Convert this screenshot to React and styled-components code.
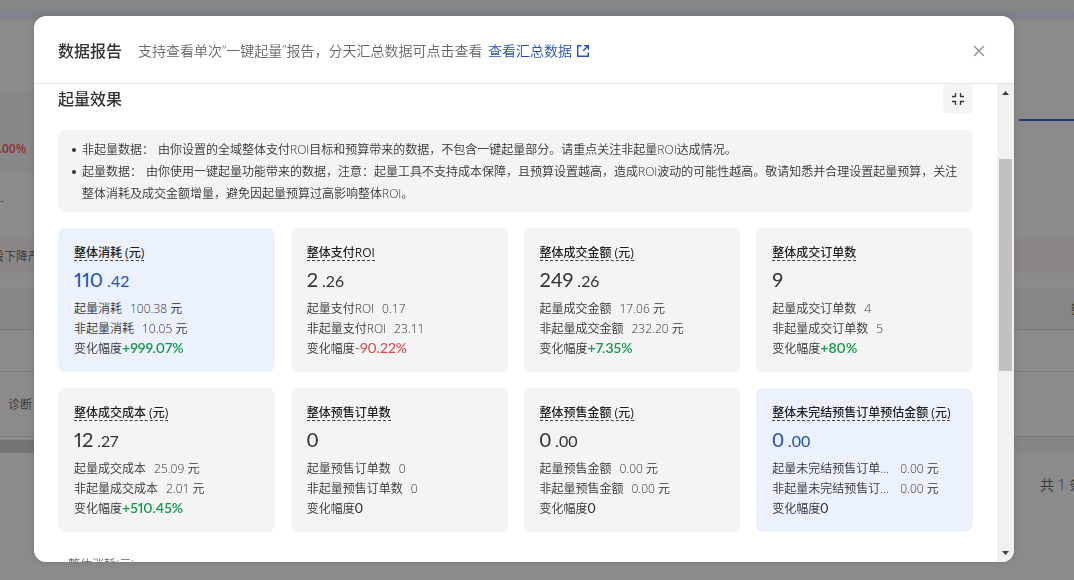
import React, { useState } from "react";
import styled, { createGlobalStyle, css } from "styled-components";

const GlobalStyle = createGlobalStyle`
  * {
    box-sizing: border-box;
  }

  body {
    margin: 0;
    background-color: #8b8b8b;
    font-family: "Open Sans", "Noto Sans CJK SC", sans-serif;
    font-size: 12px;
    color: #333333;
    overflow: hidden;
  }

  button {
    padding: 0;
    border: none;
    background: none;
    font-family: inherit;
    cursor: pointer;
  }
`;

/* 弹窗后面的页面 */
const Page = styled.div`
  display: flex;
  justify-content: space-between;
  min-height: 100vh;
  background: linear-gradient(#868688 0, #868688 8px, #80838b 12px, #80838b 18px, #8b8b8b 22px);
`;

const Side = styled.div`
  display: flex;
  flex-direction: column;
  width: ${(props) => (props.$right ? "60px" : "40px")};
  overflow: hidden;
  white-space: nowrap;
`;

const Band = styled.div`
  display: flex;
  flex-shrink: 0;
  align-items: center;
  justify-content: ${(props) => (props.$start ? "flex-start" : "flex-end")};
  height: ${(props) => props.$height}px;
  padding: 0 ${(props) => props.$right || 0}px 0 ${(props) => props.$left || 0}px;
  background-color: ${(props) => props.$color || "transparent"};
  border-bottom: ${(props) => (props.$line ? "1px solid #7a7a7a" : "none")};
  color: ${(props) => props.$text || "#333333"};
  font-size: ${(props) => props.$size || 12}px;
  font-weight: ${(props) => (props.$bold ? 600 : 350)};
`;

const ChartLine = styled.div`
  width: 55px;
  height: 2px;
  background-color: #263774;
`;

const Overlay = styled.div`
  position: fixed;
  inset: 0;
  display: flex;
  padding: 16px 60px 18px 34px;
`;

const Dialog = styled.section`
  display: flex;
  flex-direction: column;
  flex: 1;
  min-width: 0;
  background-color: #ffffff;
  border-radius: 12px;
  box-shadow: 0 0 6px rgba(0, 0, 0, 0.14);
  overflow: hidden;
`;

const Header = styled.header`
  display: flex;
  flex-shrink: 0;
  align-items: center;
  gap: 16px;
  height: 68px;
  padding: 2px 24px 0;
  border-bottom: 1px solid #e4e5e7;
`;

const Title = styled.h2`
  margin: 0;
  font-size: 16px;
  font-weight: 500;
  line-height: 24px;
  color: #333333;
`;

const Description = styled.p`
  flex: 1;
  margin: 0;
  font-size: 14px;
  font-weight: 350;
  line-height: 22px;
  color: #666666;
`;

const SummaryLink = styled.a`
  display: inline-flex;
  align-items: center;
  gap: 4px;
  margin-left: 2px;
  color: #2450b4;
  text-decoration: none;
`;

const CloseButton = styled.button`
  display: flex;
  align-items: center;
  justify-content: center;
  width: 22px;
  height: 22px;
  color: #8f8f8f;
`;

const Body = styled.div`
  display: flex;
  flex: 1;
  min-height: 0;
`;

const Content = styled.div`
  flex: 1;
  min-width: 0;
  padding: 0 24px;
  overflow: hidden;
`;

const SectionHead = styled.div`
  display: flex;
  align-items: center;
  justify-content: space-between;
  height: 30px;
`;

const ShrinkButton = styled.button`
  display: flex;
  align-items: center;
  justify-content: center;
  width: 30px;
  height: 30px;
  border-radius: 6px;
  background-color: #f5f5f5;
  color: #333333;
`;

const Notice = styled.ul`
  margin: 16px 0;
  padding: 9px 12px 7px 24px;
  border-radius: 8px;
  background-color: #f4f4f4;
  font-weight: 350;
  line-height: 22px;
  color: #333333;
  list-style: none;
`;

const NoticeItem = styled.li`
  position: relative;

  &::before {
    content: "";
    position: absolute;
    top: 9px;
    left: -10px;
    width: 4px;
    height: 4px;
    border-radius: 50%;
    background-color: #333333;
  }
`;

const NoticeLabel = styled.span`
  margin-right: 4px;
`;

const CardGrid = styled.div`
  display: grid;
  grid-template-columns: repeat(4, 1fr);
  gap: 16px;
`;

const Card = styled.article`
  min-width: 0;
  padding: 16px 16px 13px;
  border-radius: 8px;
  background-color: #f4f4f4;

  ${(props) =>
    props.$active &&
    css`
      background-color: #ebf1fd;
    `}
`;

const CardTitle = styled.h3`
  width: fit-content;
  height: 17px;
  margin: 0 0 5px;
  border-bottom: 1px dashed #444444;
  font-size: 12px;
  font-weight: 500;
  line-height: 18px;
  white-space: nowrap;
  color: #222222;
`;

const Value = styled.p`
  display: flex;
  align-items: baseline;
  gap: 4px;
  height: 28px;
  margin: 0 0 5px;
  font-family: Lato, sans-serif;
  font-size: 20px;
  font-variant-numeric: ${(props) => (props.$empty ? "tabular-nums" : "proportional-nums")};
  line-height: 26px;
  color: ${(props) => (props.$active ? "#2450b4" : "#333333")};
`;

const Decimal = styled.span`
  font-size: 16px;
`;

const Row = styled.div`
  display: flex;
  gap: 8px;
  height: 20px;
  font-weight: 350;
  line-height: 20px;
  white-space: nowrap;
  color: #333333;
`;

const RowLabel = styled.span`
  max-width: 120px;
  overflow: hidden;
  text-overflow: ellipsis;
`;

const changeColors = {
  up: "#12994a",
  down: "#d8434a",
  none: "#333333",
};

const Change = styled.div`
  display: flex;
  height: 20px;
  font-weight: 350;
  line-height: 20px;
  color: #333333;
`;

const ChangeValue = styled.span`
  font-family: Lato, sans-serif;
  font-size: 14px;
  font-variant-numeric: ${(props) =>
    props.$trend === "none" ? "tabular-nums" : "proportional-nums"};
  font-weight: ${(props) => (props.$trend === "up" ? 600 : 400)};
  line-height: 18px;
  color: ${(props) => changeColors[props.$trend]};
`;

const ChartLabel = styled.p`
  margin: 24px 10px 0;
  font-weight: 350;
  line-height: 18px;
  color: #666666;
`;

const Scrollbar = styled.div`
  display: flex;
  flex-direction: column;
  flex-shrink: 0;
  width: 17px;
  background-color: #f1f1f1;
`;

const ScrollArrow = styled.button`
  display: flex;
  align-items: center;
  justify-content: center;
  height: 18px;
  color: #404040;
`;

const Track = styled.div`
  flex: 1;
  padding: 57px 2px 0;
`;

const Thumb = styled.div`
  height: 55%;
  background-color: #c1c1c1;
`;

const metrics = [
  {
    title: "整体消耗 (元)",
    value: "110",
    decimal: ".42",
    rows: [
      ["起量消耗", "100.38 元"],
      ["非起量消耗", "10.05 元"],
    ],
    change: "+999.07%",
    trend: "up",
    active: true,
  },
  {
    title: "整体支付ROI",
    value: "2",
    decimal: ".26",
    rows: [
      ["起量支付ROI", "0.17"],
      ["非起量支付ROI", "23.11"],
    ],
    change: "-90.22%",
    trend: "down",
  },
  {
    title: "整体成交金额 (元)",
    value: "249",
    decimal: ".26",
    rows: [
      ["起量成交金额", "17.06 元"],
      ["非起量成交金额", "232.20 元"],
    ],
    change: "+7.35%",
    trend: "up",
  },
  {
    title: "整体成交订单数",
    value: "9",
    rows: [
      ["起量成交订单数", "4"],
      ["非起量成交订单数", "5"],
    ],
    change: "+80%",
    trend: "up",
  },
  {
    title: "整体成交成本 (元)",
    value: "12",
    decimal: ".27",
    rows: [
      ["起量成交成本", "25.09 元"],
      ["非起量成交成本", "2.01 元"],
    ],
    change: "+510.45%",
    trend: "up",
  },
  {
    title: "整体预售订单数",
    value: "0",
    rows: [
      ["起量预售订单数", "0"],
      ["非起量预售订单数", "0"],
    ],
    change: "0",
    trend: "none",
  },
  {
    title: "整体预售金额 (元)",
    value: "0",
    decimal: ".00",
    rows: [
      ["起量预售金额", "0.00 元"],
      ["非起量预售金额", "0.00 元"],
    ],
    change: "0",
    trend: "none",
  },
  {
    title: "整体未完结预售订单预估金额 (元)",
    value: "0",
    decimal: ".00",
    rows: [
      ["起量未完结预售订单预估金额", "0.00 元"],
      ["非起量未完结预售订单预估金额", "0.00 元"],
    ],
    change: "0",
    trend: "none",
    active: true,
  },
];

const ExternalIcon = () => (
  <svg width="14" height="14" viewBox="0 0 14 14" fill="none" stroke="currentColor" strokeWidth="1.4">
    <path d="M5.5 1.7H1.7v10.6h10.6V8.5" />
    <path d="M8.2 1.7h4.1v4.1M12.3 1.7L7.2 6.8" />
  </svg>
);

const CloseIcon = () => (
  <svg width="12" height="12" viewBox="0 0 12 12" fill="none" stroke="currentColor" strokeWidth="1.4">
    <path d="M1 1l10 10M11 1L1 11" />
  </svg>
);

const ShrinkIcon = () => (
  <svg width="12" height="12" viewBox="0 0 12 12" fill="none" stroke="currentColor" strokeWidth="1.3">
    <path d="M0 3.5h3.5V0M8.5 0v3.5H12M0 8.5h3.5V12M12 8.5H8.5V12" />
  </svg>
);

const ArrowIcon = ({ down }) => (
  <svg width="7" height="4" viewBox="0 0 7 4" fill="currentColor">
    <path d={down ? "M0 0h7L3.5 4z" : "M0 4h7L3.5 0z"} />
  </svg>
);

const MetricCard = ({ metric }) => (
  <Card $active={metric.active}>
    <CardTitle>{metric.title}</CardTitle>
    <Value $active={metric.active} $empty={metric.value === "0"}>
      <span>{metric.value}</span>
      {metric.decimal && <Decimal>{metric.decimal}</Decimal>}
    </Value>
    {metric.rows.map(([label, value]) => (
      <Row key={label}>
        <RowLabel>{label}</RowLabel>
        <span>{value}</span>
      </Row>
    ))}
    <Change>
      变化幅度
      <ChangeValue $trend={metric.trend}>{metric.change}</ChangeValue>
    </Change>
  </Card>
);

const App = () => {
  const [isOpen, setIsOpen] = useState(true);
  const [isShrunk, setIsShrunk] = useState(false);

  return (
    <>
      <GlobalStyle />
      <Page lang="zh-CN">
        <Side>
          <Band $height={90} />
          <Band $height={32} $color="#888888" />
          <Band $height={52} $right={14} $bold $color="#888888" $text="#8c2f35">
            .00%
          </Band>
          <Band $height={52} $start>
            -
          </Band>
          <Band $height={12} />
          <Band $height={35} $color="#8b8686">
            投下降严
          </Band>
          <Band $height={15} />
          <Band $height={42} $color="#868688" $line />
          <Band $height={42} $line />
          <Band $height={65} $right={8} $line>
            诊断
          </Band>
          <Band $height={3} />
          <Band $height={13} $color="#747474" />
        </Side>
        <Side $right>
          <Band $height={119} />
          <Band $height={2}>
            <ChartLine />
          </Band>
          <Band $height={117} />
          <Band $height={35} $color="#8b8686" />
          <Band $height={15} />
          <Band $height={42} $left={57} $start $color="#868688" $line>
            整体
          </Band>
          <Band $height={42} $line />
          <Band $height={65} $line />
          <Band $height={16} $color="#858585" />
          <Band $height={62} $left={26} $start $size={14}>
            共 1 条
          </Band>
        </Side>
      </Page>
      {isOpen && (
        <Overlay lang="zh-CN">
          <Dialog role="dialog" aria-labelledby="report-title">
            <Header>
              <Title id="report-title">数据报告</Title>
              <Description>
                支持查看单次“一键起量”报告，分天汇总数据可点击查看{" "}
                <SummaryLink href="#summary">
                  查看汇总数据
                  <ExternalIcon />
                </SummaryLink>
              </Description>
              <CloseButton aria-label="关闭" onClick={() => setIsOpen(false)}>
                <CloseIcon />
              </CloseButton>
            </Header>
            <Body>
              <Content>
                <SectionHead>
                  <Title>起量效果</Title>
                  <ShrinkButton aria-label="收起" onClick={() => setIsShrunk(!isShrunk)}>
                    <ShrinkIcon />
                  </ShrinkButton>
                </SectionHead>
                {!isShrunk && (
                  <Notice>
                    <NoticeItem>
                      <NoticeLabel>非起量数据：</NoticeLabel>
                      由你设置的全域整体支付ROI目标和预算带来的数据，不包含一键起量部分。请重点关注非起量ROI达成情况。
                    </NoticeItem>
                    <NoticeItem>
                      <NoticeLabel>起量数据：</NoticeLabel>
                      由你使用一键起量功能带来的数据，注意：起量工具不支持成本保障，且预算设置越高，造成ROI波动的可能性越高。敬请知悉并合理设置起量预算，关注整体消耗及成交金额增量，避免因起量预算过高影响整体ROI。
                    </NoticeItem>
                  </Notice>
                )}
                <CardGrid>
                  {metrics.map((metric) => (
                    <MetricCard key={metric.title} metric={metric} />
                  ))}
                </CardGrid>
                <ChartLabel>整体消耗(元)</ChartLabel>
              </Content>
              <Scrollbar>
                <ScrollArrow aria-label="向上滚动">
                  <ArrowIcon />
                </ScrollArrow>
                <Track>
                  <Thumb />
                </Track>
                <ScrollArrow aria-label="向下滚动">
                  <ArrowIcon down />
                </ScrollArrow>
              </Scrollbar>
            </Body>
          </Dialog>
        </Overlay>
      )}
    </>
  );
};

export default App;
